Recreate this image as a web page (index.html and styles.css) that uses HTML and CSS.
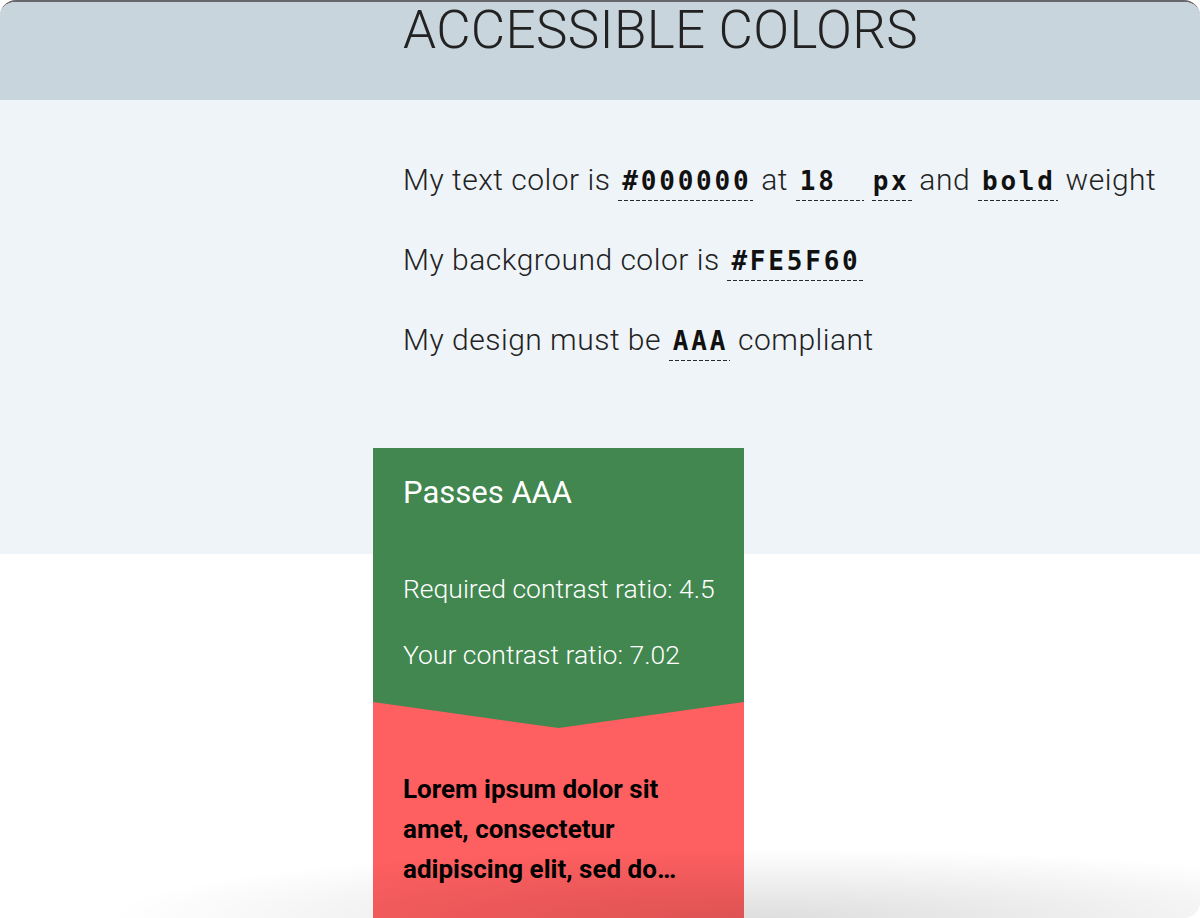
FILE: index.html
```html
<!DOCTYPE html>
<html lang="en">
<head>
<meta charset="utf-8">
<title>Accessible Colors</title>
<link rel="stylesheet" href="styles.css">
</head>
<body>
<div class="frame">
  <header class="top">
    <h1 class="title">ACCESSIBLE COLORS</h1>
  </header>
  <section class="hero">
    <div class="prompts">
      <p class="line">My text color is <span class="val">#000000</span> at <span class="val size">18</span> <span class="val unit">px</span> and <span class="val">bold</span> weight</p>
      <p class="line">My background color is <span class="val">#FE5F60</span></p>
      <p class="line">My design must be <span class="val">AAA</span> compliant</p>
    </div>
    <div class="card">
      <div class="result">
        <h2 class="result-title">Passes AAA</h2>
        <p class="ratio">Required contrast ratio: 4.5</p>
        <p class="ratio">Your contrast ratio: 7.02</p>
      </div>
      <div class="sample">
        <p class="sample-text">Lorem ipsum dolor sit amet, consectetur adipiscing elit, sed do…</p>
      </div>
    </div>
  </section>
  <div class="shade"></div>
</div>
</body>
</html>
```
FILE: styles.css
```css
html, body {
  margin: 0;
  padding: 0;
  background: #ffffff;
}

body {
  font-family: Roboto, "Liberation Sans", sans-serif;
  color: #222222;
}

.frame {
  position: relative;
  height: 918px;
  border-radius: 16px;
  border-top: 2px solid #66666b;
  overflow: hidden;
  background: #ffffff;
  box-sizing: border-box;
}

.top {
  height: 98px;
  background: #c9d5dd;
  padding-left: 403px;
  display: flow-root;
}

.title {
  margin: 0;
  font-size: 53px;
  line-height: 56px;
  font-weight: 300;
  color: #222222;
  letter-spacing: 0.3px;
}

.hero {
  height: 454px;
  background: #eff4f8;
  box-sizing: border-box;
  padding-top: 40px;
  display: flow-root;
}

.prompts {
  padding-left: 403px;
}

.line {
  margin: 0;
  font-size: 30px;
  letter-spacing: 0.5px;
  line-height: 80px;
  font-weight: 300;
  color: #222222;
  white-space: nowrap;
}

.val {
  display: inline-block;
  font-family: "DejaVu Sans Mono", "Liberation Mono", monospace;
  font-weight: 700;
  font-size: 26px;
  line-height: 38px;
  letter-spacing: 2.8px;
  color: #111111;
  padding: 0 2px 1px 4px;
  background-image: repeating-linear-gradient(to right, #2a2a2a 0, #2a2a2a 4px, transparent 4px, transparent 6px);
  background-size: 100% 1px;
  background-position: left bottom;
  background-repeat: no-repeat;
}

.val.size {
  width: 68px;
  box-sizing: border-box;
}

.val.unit {
  padding-left: 1px;
}

.card {
  position: relative;
  margin: 68px 0 0 373px;
  width: 371px;
  background: #fe5f60;
}

.result {
  background: #41874f;
  height: 280px;
  box-sizing: border-box;
  padding: 25px 30px 0;
  color: #ffffff;
  clip-path: polygon(0 0, 100% 0, 100% 254px, 50% 100%, 0 254px);
}

.result-title {
  margin: 0 0 56px;
  font-size: 31px;
  line-height: 40px;
  font-weight: 400;
}

.ratio {
  margin: 0 0 26px;
  font-size: 26.5px;
  line-height: 40px;
  font-weight: 300;
  white-space: nowrap;
}

.sample {
  padding: 41px 30px 40px;
}

.sample-text {
  margin: 0;
  font-size: 26px;
  line-height: 40px;
  font-weight: 700;
  color: #000000;
}

.shade {
  position: absolute;
  left: 0;
  right: 0;
  bottom: 0;
  height: 70px;
  pointer-events: none;
  background: radial-gradient(ellipse 55% 100% at 64% 100%, rgba(0, 0, 0, 0.13), rgba(0, 0, 0, 0) 100%);
}
```
